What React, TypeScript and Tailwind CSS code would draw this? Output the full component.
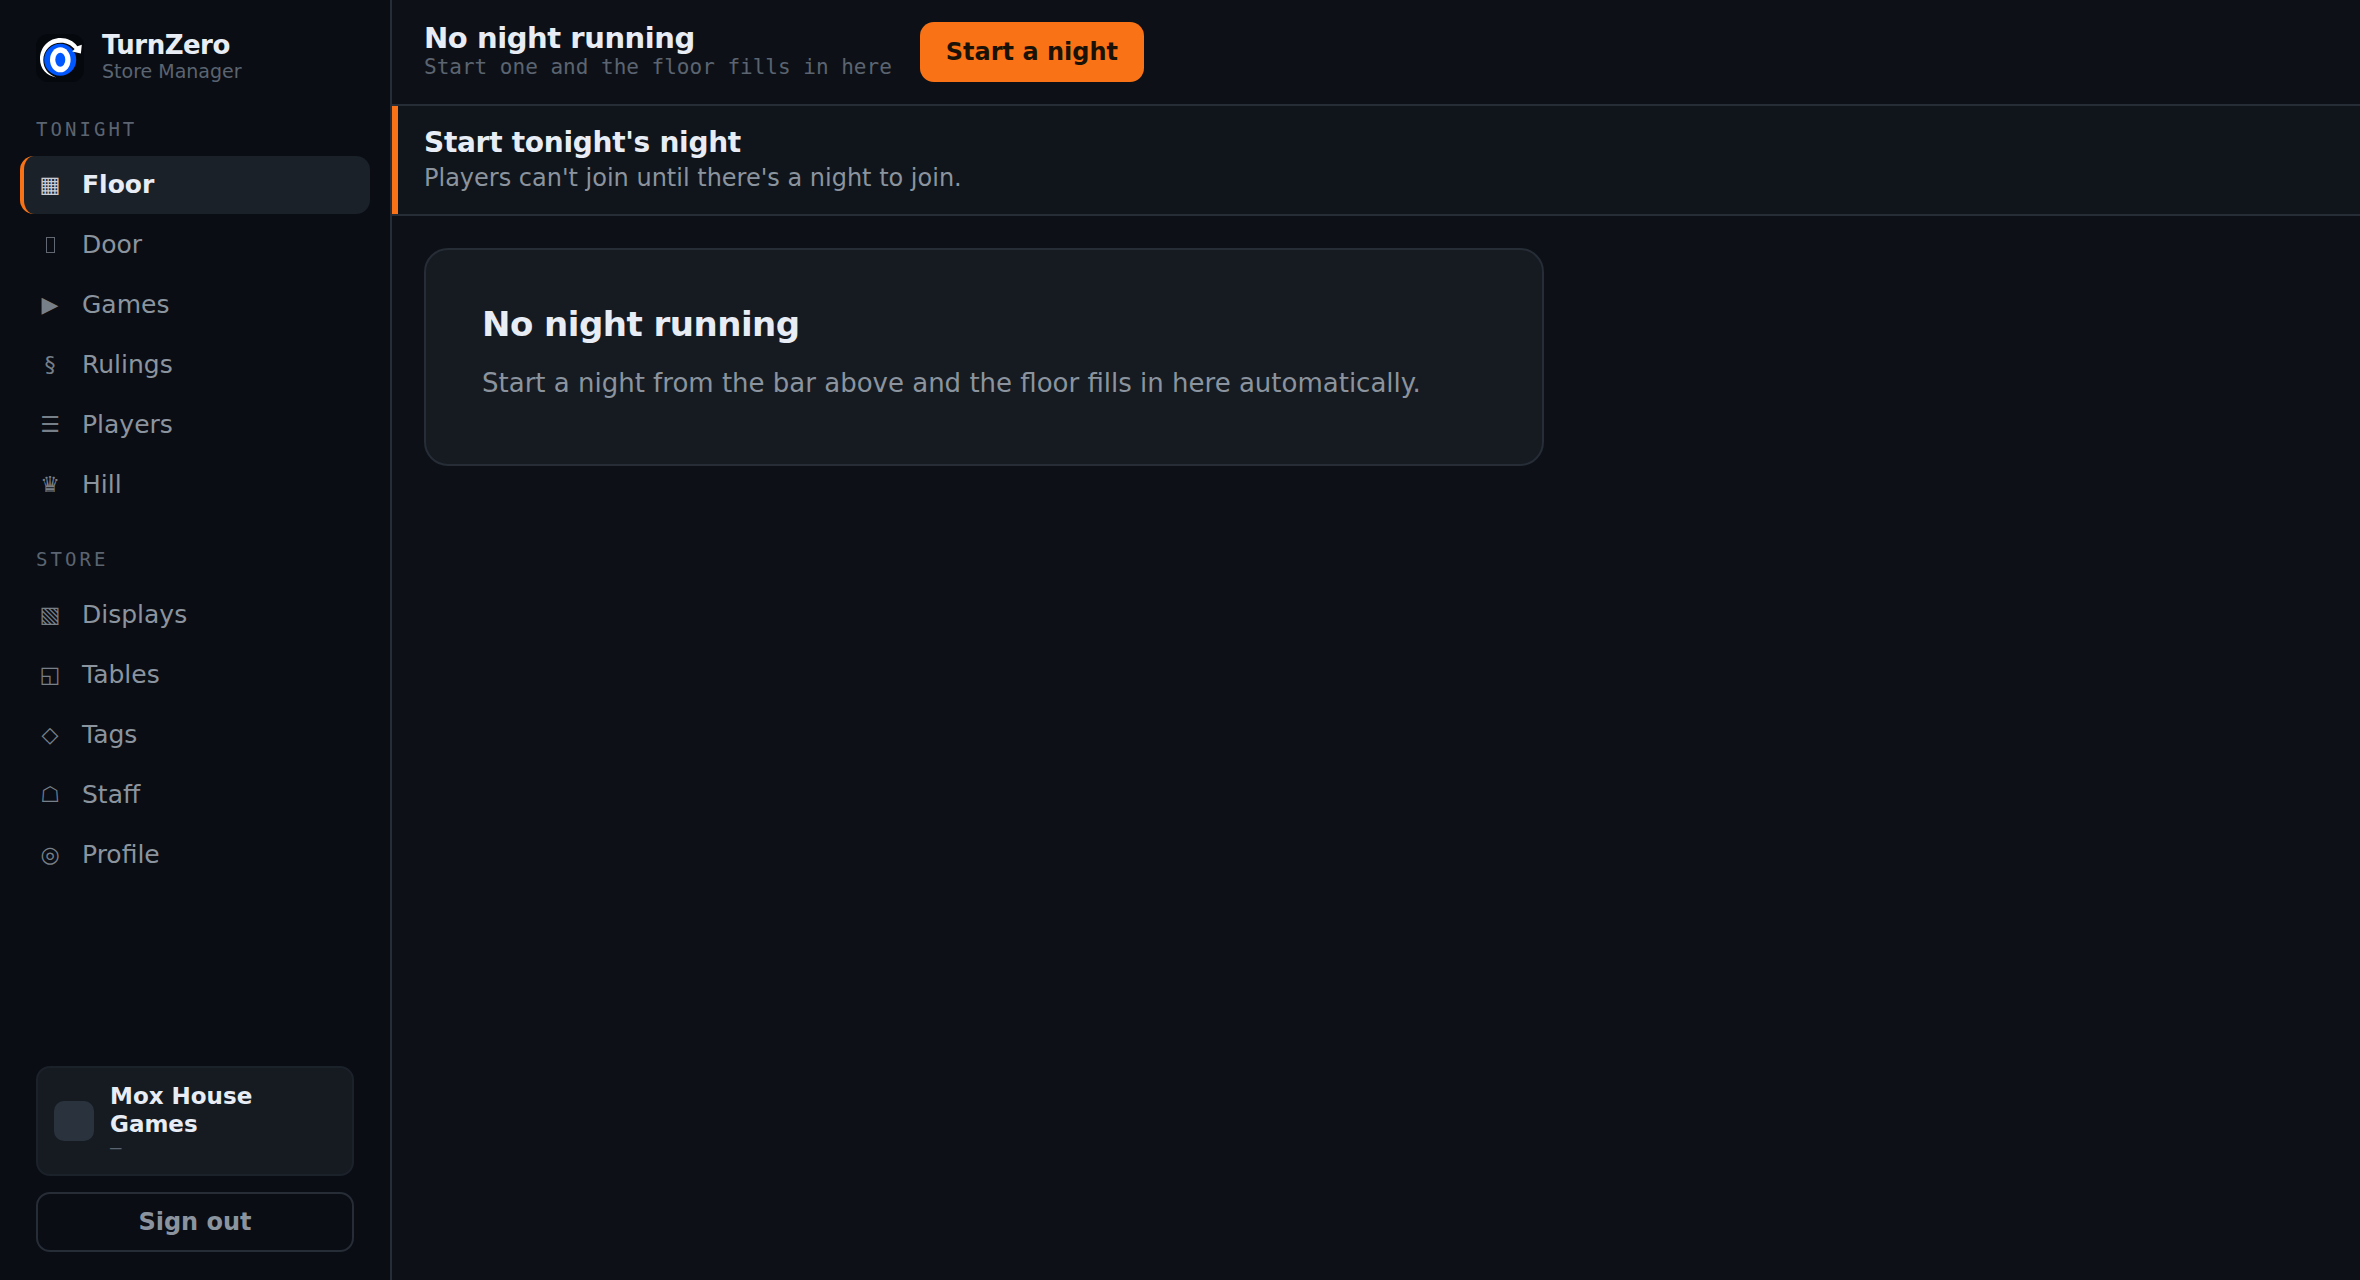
import React from "react";

type NavItem = { glyph: React.ReactNode; label: string };

const DoorGlyph = () => (
    <svg className="mx-auto h-4 w-[9px]" viewBox="0 0 9 16">
        <rect
            x="0.5"
            y="0.5"
            width="8"
            height="15"
            fill="none"
            stroke="currentColor"
            strokeOpacity="0.8"
        />
    </svg>
);

const tonight: NavItem[] = [
    { glyph: "▦", label: "Floor" },
    { glyph: <DoorGlyph />, label: "Door" },
    { glyph: "▶", label: "Games" },
    { glyph: "§", label: "Rulings" },
    { glyph: "☰", label: "Players" },
    { glyph: "♛", label: "Hill" },
];

const store: NavItem[] = [
    { glyph: "▧", label: "Displays" },
    { glyph: "◱", label: "Tables" },
    { glyph: "◇", label: "Tags" },
    { glyph: "☖", label: "Staff" },
    { glyph: "◎", label: "Profile" },
];

const Logo = () => (
    <svg className="size-12 shrink-0" viewBox="0 0 48 48" aria-hidden="true">
        <rect width="48" height="48" rx="12" fill="#05080d" />
        <circle cx="24.2" cy="25.8" r="16" fill="#0057ff" />
        <path
            d="M20.5 43.4C10.500 42 4 34.500 4 25C4 13 13 4 24.500 4C31.500 4 37.500 7 41.300 12.200L45.800 10.800L44.900 19.500L36.200 17.600L38.600 15C35.200 11 30.500 8.700 25 8.700C15 8.700 7.300 16 7.300 26C7.300 34.500 12.500 41 20.500 43.400Z"
            fill="#fff"
        />
        <ellipse cx="24.3" cy="25.800" rx="10.300" ry="12.500" fill="#fff" />
        <ellipse cx="24.3" cy="25.800" rx="5" ry="7" fill="#0057ff" />
    </svg>
);

const NavSection = ({
    title,
    items,
    active,
}: {
    title: string;
    items: NavItem[];
    active: string;
}) => (
    <div>
        <h2 className="px-4 font-['DejaVu_Sans_Mono',monospace] text-[19px] leading-[26px] tracking-[0.16em] text-[#5b6470] uppercase">
            {title}
        </h2>
        <ul className="mt-3.5 flex flex-col gap-0.5">
            {items.map((item) => {
                const isActive = item.label === active;
                return (
                    <li key={item.label}>
                        <a
                            href={`#${item.label.toLowerCase()}`}
                            aria-current={isActive ? "page" : undefined}
                            className={`flex h-[58px] items-center gap-[18px] rounded-[14px] border-l-4 px-3 text-[25px] leading-8 ${
                                isActive
                                    ? "border-[#f97316] bg-[#1b2129] font-bold text-[#e8edf5]"
                                    : "border-transparent text-[#8b949e]"
                            }`}
                        >
                            <span
                                aria-hidden="true"
                                className="w-7 text-center text-[22px] leading-6 font-normal opacity-85"
                            >
                                {item.glyph}
                            </span>
                            {item.label}
                        </a>
                    </li>
                );
            })}
        </ul>
    </div>
);

const Sidebar = () => (
    <aside className="flex w-[392px] shrink-0 flex-col border-r-2 border-[#262d36] bg-[#0a0d14] px-5 pt-8 pb-7">
        <div className="flex items-center gap-[18px] px-4">
            <Logo />
            <div>
                <div className="text-[26px] leading-[26px] font-bold tracking-[-0.02em] text-[#e8edf5]">
                    TurnZero
                </div>
                <div className="text-[19px] leading-[26px] text-[#5b6470]">
                    Store Manager
                </div>
            </div>
        </div>

        <nav className="mt-8 flex flex-col gap-8">
            <NavSection title="Tonight" items={tonight} active="Floor" />
            <NavSection title="Store" items={store} active="Floor" />
        </nav>

        <div className="mt-auto flex flex-col gap-4 px-4">
            <div className="flex items-center gap-4 rounded-[14px] border-2 border-[#1c222a] bg-[#161b22] px-4 py-3.5">
                <div className="size-10 shrink-0 rounded-[10px] bg-[#2a333d]" />
                <div className="pb-1">
                    <div className="text-[23px] leading-7 font-bold text-[#e8edf5]">
                        Mox House Games
                    </div>
                    <div className="font-['DejaVu_Sans_Mono',monospace] text-[19px] leading-[18px] text-[#5b6470]">
                        —
                    </div>
                </div>
            </div>
            <button
                type="button"
                className="h-[60px] rounded-[14px] border-2 border-[#262d36] text-[24px] font-bold text-[#8b949e]"
            >
                Sign out
            </button>
        </div>
    </aside>
);

export default function App() {
    return (
        <div className="flex min-h-screen bg-[#0d1117] font-['DejaVu_Sans',sans-serif] text-[#e8edf5]">
            <Sidebar />
            <div className="min-w-0 flex-1">
                <header className="flex h-[106px] items-center gap-7 border-b-2 border-[#262d36] px-8">
                    <div className="pb-0.5">
                        <h1 className="text-[29px] leading-8 font-bold tracking-[-0.015em]">
                            No night running
                        </h1>
                        <p className="font-['DejaVu_Sans_Mono',monospace] text-[21px] leading-[26px] text-[#5b6470]">
                            Start one and the floor fills in here
                        </p>
                    </div>
                    <button
                        type="button"
                        className="h-[60px] rounded-[14px] bg-[#f97316] px-[26px] text-[24px] font-bold text-[#1a1206]"
                    >
                        Start a night
                    </button>
                </header>

                <div className="border-b-2 border-[#262d36]">
                    <section className="border-l-6 border-[#f97316] bg-[#10151b] px-[26px] pt-[21px] pb-5">
                        <h2 className="text-[28px] leading-8 font-bold tracking-[-0.01em]">
                            Start tonight's night
                        </h2>
                        <p className="mt-[3px] text-[24px] leading-8 text-[#8b949e]">
                            Players can't join until there's a night to join.
                        </p>
                    </section>
                </div>

                <main className="p-8">
                    <section className="max-w-[1120px] rounded-3xl border-2 border-[#262d36] bg-[#161b22] px-14 pt-[54px] pb-[58px]">
                        <h2 className="text-[34px] leading-10 font-bold tracking-[-0.015em]">
                            No night running
                        </h2>
                        <p className="mt-4 text-[26px] leading-[46px] text-[#8b949e]">
                            Start a night from the bar above and the floor fills
                            in here automatically.
                        </p>
                    </section>
                </main>
            </div>
        </div>
    );
}
